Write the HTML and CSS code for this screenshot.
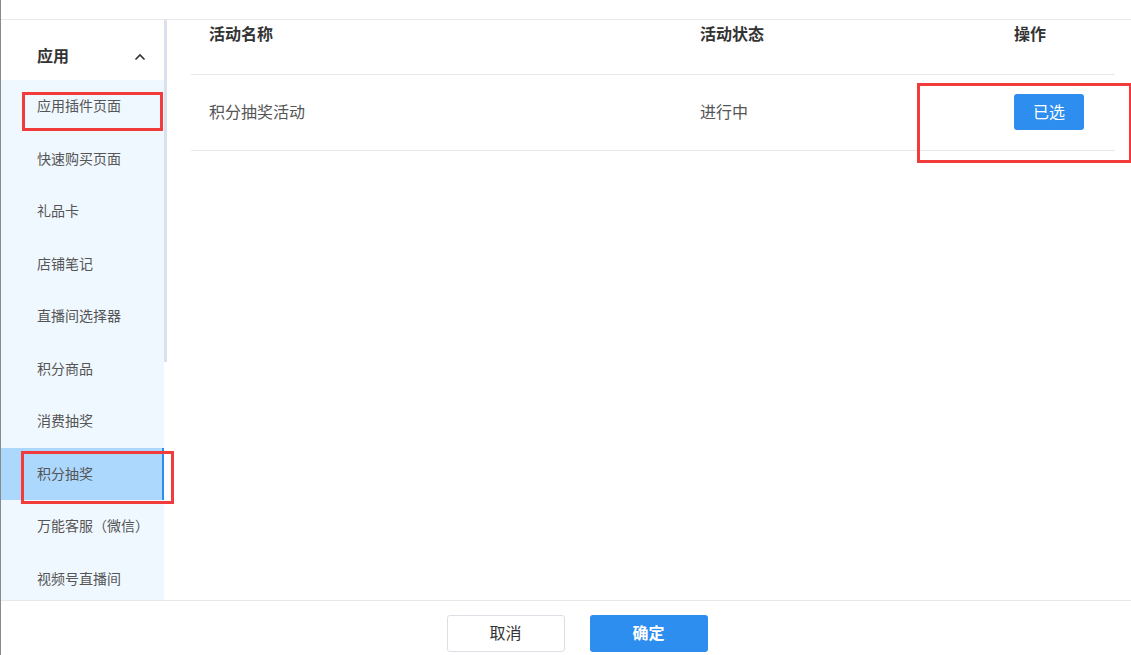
FILE: index.html
```html
<!DOCTYPE html>
<html lang="zh-CN">
<head>
    <meta charset="UTF-8">
    <meta name="viewport" content="width=device-width, initial-scale=1.0">
    <title>选择链接</title>
    <link rel="stylesheet" href="styles.css">
</head>
<body>
    <div class="page">
        <div class="top-gap"></div>
        <div class="main">
            <div class="sidebar">
                <div class="menu">
                    <div class="menu-title">
                        <span>应用</span>
                        <svg class="chevron" width="12" height="8" viewBox="0 0 12 8">
                            <polyline points="1.5,6.5 6,2 10.5,6.5" fill="none" stroke="#333" stroke-width="1.6"/>
                        </svg>
                    </div>
                    <div class="menu-list">
                        <div class="menu-item">应用插件页面</div>
                        <div class="menu-item">快速购买页面</div>
                        <div class="menu-item">礼品卡</div>
                        <div class="menu-item">店铺笔记</div>
                        <div class="menu-item">直播间选择器</div>
                        <div class="menu-item">积分商品</div>
                        <div class="menu-item">消费抽奖</div>
                        <div class="menu-item active">积分抽奖</div>
                        <div class="menu-item">万能客服（微信）</div>
                        <div class="menu-item">视频号直播间</div>
                    </div>
                </div>
                <div class="scrollbar"><div class="thumb"></div></div>
            </div>
            <div class="content">
                <div class="table">
                    <div class="row head">
                        <div class="col name">活动名称</div>
                        <div class="col status">活动状态</div>
                        <div class="col action">操作</div>
                    </div>
                    <div class="row">
                        <div class="col name">积分抽奖活动</div>
                        <div class="col status">进行中</div>
                        <div class="col action"><button class="btn-picked">已选</button></div>
                    </div>
                </div>
            </div>
        </div>
        <div class="footer">
            <button class="btn btn-cancel">取消</button>
            <button class="btn btn-ok">确定</button>
        </div>

        <!-- annotation boxes -->
        <div class="mark mark-plugin"></div>
        <div class="mark mark-lottery"></div>
        <div class="mark mark-picked"></div>
    </div>
</body>
</html>
```

FILE: styles.css
```css
body {
    margin: 0;
    padding: 0;
    font-family: "Noto Sans CJK SC", "Microsoft YaHei", sans-serif;
    background-color: #fff;
    overflow: hidden;
}
.page {
    position: relative;
    height: 655px;
    border-left: 1px solid #8a8a8a;
    display: flex;
    flex-direction: column;
    box-sizing: border-box;
}
.top-gap {
    height: 19px;
    border-bottom: 1px solid #e8e8e8;
    flex-shrink: 0;
}
.main {
    flex: 1;
    display: flex;
    min-height: 0;
    overflow: hidden;
}
/* Sidebar */
.sidebar {
    display: flex;
    flex-shrink: 0;
}
.menu {
    width: 163px;
    overflow: hidden;
}
.menu-title {
    height: 60px;
    box-sizing: border-box;
    padding: 24px 18px 0 36px;
    display: flex;
    justify-content: space-between;
    font-size: 16px;
    font-weight: bold;
    line-height: 22px;
    color: #333;
    background-color: #fff;
}
.chevron {
    margin-top: 9px;
}
.menu-list {
    background-color: #f0f8ff;
}
.menu-item {
    height: 52.5px;
    line-height: 50px;
    padding-left: 36px;
    font-size: 14px;
    color: #555;
    box-sizing: border-box;
}
.menu-item.active {
    background-color: #acd8fd;
    border-right: 2px solid #2d8ef0;
}
.scrollbar {
    width: 3px;
    background-color: #fff;
}
.scrollbar .thumb {
    height: 342px;
    background-color: #d9e1ec;
}
/* Table */
.content {
    flex: 1;
    padding: 0 16px 0 24px;
}
.table {
    font-size: 16px;
}
.row {
    display: flex;
    align-items: center;
    height: 76px;
    padding-bottom: 3px;
    border-bottom: 1px solid #e8e8e8;
    color: #555;
    box-sizing: border-box;
}
.row.head {
    height: 55px;
    padding-bottom: 0;
    align-items: flex-start;
    line-height: 26px;
    font-weight: bold;
    color: #333;
}
.col.name {
    width: 491px;
    padding-left: 18px;
    box-sizing: border-box;
}
.col.status {
    width: 332px;
    padding-left: 18px;
    box-sizing: border-box;
}
.col.action {
    flex: 1;
}
.btn-picked {
    width: 70px;
    height: 36px;
    border: none;
    border-radius: 3px;
    background-color: #2d8ef0;
    color: #fff;
    font-family: inherit;
    font-size: 16px;
    padding: 0 0 2px;
    margin-top: 1px;
}
/* Footer */
.footer {
    height: 55px;
    flex-shrink: 0;
    border-top: 1px solid #e8e8e8;
    display: flex;
    justify-content: center;
    gap: 25px;
    padding: 14px 0 0 22px;
    box-sizing: border-box;
}
.btn {
    width: 118px;
    height: 37px;
    border-radius: 3px;
    font-family: inherit;
    font-size: 16px;
    padding: 0 0 3px;
    cursor: pointer;
}
.btn-cancel {
    background-color: #fff;
    border: 1px solid #dcdfe6;
    color: #333;
}
.btn-ok {
    background-color: #2d8ef0;
    border: none;
    color: #fff;
    font-weight: bold;
}
/* Red annotation boxes */
.mark {
    position: absolute;
    border: 3px solid #f23b3b;
    box-sizing: border-box;
}
.mark-plugin {
    left: 21px;
    top: 92px;
    width: 141px;
    height: 39px;
}
.mark-lottery {
    left: 20px;
    top: 451px;
    width: 153px;
    height: 53px;
}
.mark-picked {
    left: 916px;
    top: 83px;
    width: 215px;
    height: 80px;
}
```
